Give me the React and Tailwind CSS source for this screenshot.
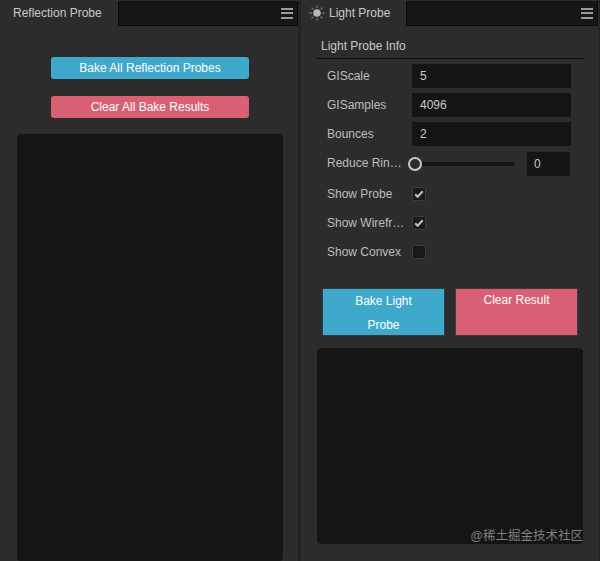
import React from 'react';

const font = { fontFamily: '"Liberation Sans", "Noto Sans CJK SC", sans-serif' };

function MenuIcon() {
    return (
        <div className="flex flex-col gap-[2.5px] w-[12px] mr-[4px]">
            <div className="h-[2px] bg-[#9a9a9a]"></div>
            <div className="h-[2px] bg-[#9a9a9a]"></div>
            <div className="h-[2px] bg-[#9a9a9a]"></div>
        </div>
    );
}

function SunIcon() {
    return (
        <svg width="16" height="16" viewBox="0 0 16 16" className="mr-[4px]">
            <circle cx="8" cy="8" r="3.8" fill="#b5b5b5" />
            <g stroke="#707070" strokeWidth="1.4" strokeLinecap="round">
                <path d="M8 .8v1.6M8 13.6v1.6M.8 8h1.6M13.6 8h1.6M2.9 2.9l1.1 1.1M12 12l1.1 1.1M2.9 13.1L4 12M12 4l1.1-1.1" />
            </g>
        </svg>
    );
}

function Tabs({ tabClass, stripClass, icon, title }) {
    return (
        <div className="flex h-[26px] shrink-0">
            <div className={`flex items-center text-[12px] text-[#c8c8c8] ${tabClass}`}>
                {icon}
                <span className="whitespace-nowrap">{title}</span>
            </div>
            <div className={`flex-1 flex items-center justify-end bg-[#161616] border border-t-0 border-[#0a0a0a] mt-[1px] ${stripClass}`}>
                <MenuIcon />
            </div>
        </div>
    );
}

function Field({ label, value, last }) {
    return (
        <div className={`flex items-center h-[24px] ${last ? 'mb-[6px]' : 'mb-[5px]'}`}>
            <div className="w-[85px] text-[12px] text-[#bdbdbd]">{label}</div>
            <div className="w-[159px] h-[24px] bg-[#141414] text-[12px] text-[#c8c8c8] flex items-center pl-[8px]">{value}</div>
        </div>
    );
}

function CheckRow({ label, checked }) {
    return (
        <div className="flex items-center h-[24px] mb-[5px]">
            <div className="w-[85px] text-[12px] text-[#bdbdbd] whitespace-nowrap">{label}</div>
            <div className="w-[14px] h-[14px] bg-[#1a1a1a] border border-[#3c3c3c] rounded-[2px] flex items-center justify-center">
                {checked && (
                    <svg width="10" height="10" viewBox="0 0 10 10">
                        <path d="M1.2 5.2l2.5 2.6 5-5.6" fill="none" stroke="#c0c0c0" strokeWidth="2.1" />
                    </svg>
                )}
            </div>
        </div>
    );
}

export default function App() {
    return (
        <div className="flex w-[600px] h-[561px] overflow-hidden bg-[#232323]" style={font}>
            <div className="w-[298px] h-full flex flex-col bg-[#2c2c2c]">
                <Tabs tabClass="w-[118px] pl-[13px]" title="Reflection Probe" />
                <div className="flex flex-col items-center pt-[31px] pl-[17px] pr-[15px] flex-1 min-h-0">
                    <button className="w-[198px] h-[22px] rounded-[3px] bg-[#3fa9cb] text-white text-[12px]">Bake All Reflection Probes</button>
                    <button className="w-[198px] h-[22px] rounded-[3px] bg-[#d95f74] text-white text-[12px] mt-[17px]">Clear All Bake Results</button>
                    <div className="w-full flex-1 mt-[16px] bg-[#151515] rounded-[4px]"></div>
                </div>
            </div>
            <div className="w-[298px] h-full ml-[3px] flex flex-col bg-[#2c2c2c] relative">
                <Tabs tabClass="w-[105px] pl-[8px]" stripClass="mr-[1px]" icon={<SunIcon />} title="Light Probe" />
                <div className="px-[16px] flex-1 flex flex-col">
                    <div className="h-[33px] pt-[7px] pl-[4px] flex items-center text-[12px] text-[#c8c8c8] border-b border-[#0c0c0c] mb-[5px]">Light Probe Info</div>
                    <div className="pl-[10px]">
                        <Field label="GIScale" value="5" />
                        <Field label="GISamples" value="4096" />
                        <Field label="Bounces" value="2" last />
                        <div className="flex items-center h-[24px] mb-[6px]">
                            <div className="w-[81px] text-[12px] text-[#bdbdbd] whitespace-nowrap pb-[2px]">Reduce Rin…</div>
                            <div className="w-[107px] h-[14px] flex items-center relative">
                                <div className="w-full h-[4px] ml-[4px] bg-[#141414] rounded-full"></div>
                                <div className="absolute left-0 w-[14px] h-[14px] rounded-full border-[2px] border-[#c8c8c8] bg-[#2c2c2c]"></div>
                            </div>
                            <div className="ml-[12px] w-[43px] h-[24px] bg-[#141414] text-[12px] text-[#c8c8c8] flex items-center pl-[7px]">0</div>
                        </div>
                        <CheckRow label="Show Probe" checked />
                        <CheckRow label="Show Wirefr…" checked />
                        <CheckRow label="Show Convex" />
                    </div>
                    <div className="flex gap-[10px] pl-[5px] mt-[19px]">
                        <button className="w-[123px] h-[48px] bg-[#3fa9cb] text-white text-[12px] leading-[24px] border border-[#3a3a3a]">Bake Light<br />Probe</button>
                        <button className="w-[123px] h-[48px] bg-[#d95f74] text-white text-[12px] leading-[22px] border border-[#3a3a3a] flex justify-center items-start">Clear Result</button>
                    </div>
                    <div className="h-[196px] mt-[12px] bg-[#151515] rounded-[4px]"></div>
                </div>
                <div className="absolute right-[16px] top-[529px] text-[12.5px] leading-[15px] text-[#7f7f7f] whitespace-nowrap">@稀土掘金技术社区</div>
            </div>
        </div>
    );
}
